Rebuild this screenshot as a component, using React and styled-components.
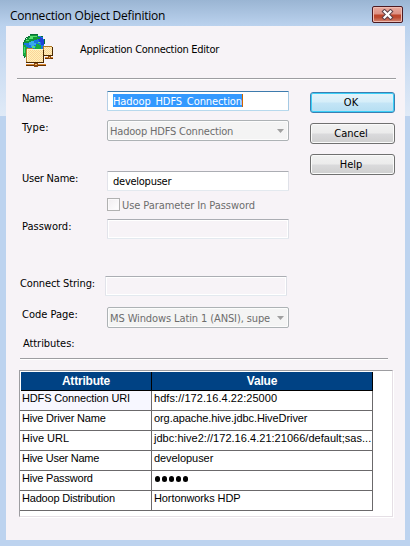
import React from 'react';
import styled, { createGlobalStyle } from 'styled-components';

const Global = createGlobalStyle`
  *, *::before, *::after { box-sizing: border-box; }
  body { margin: 0; }
`;

const Window = styled.div`
  width: 410px;
  height: 546px;
  display: flex;
  flex-direction: column;
  padding: 0 5px 6px 6px;
  background:
    linear-gradient(#9ab5d3 0, #bbd2ee 26px, transparent 26px),
    linear-gradient(#bbd2ee 26px, #e0eaf7 116px, #bdd3ef 116px);
  font: 11px/16px "DejaVu Sans Condensed", "DejaVu Sans", sans-serif;
  color: #000;
  white-space: nowrap;
`;

const TitleBar = styled.header`
  flex: none;
  height: 26px;
  display: flex;
  justify-content: space-between;
  padding: 6px 2px 0 4px;
`;

const Title = styled.h1`
  margin: 0;
  font: 12px/19px "Open Sans", sans-serif;
  letter-spacing: -0.22px;
`;

const CloseButton = styled.button`
  width: 31px;
  height: 17px;
  padding: 0;
  display: flex;
  align-items: center;
  justify-content: center;
  border: 1px solid #4c1a22;
  border-radius: 2px;
  background: linear-gradient(#e9aa9f 0, #dc8f82 48%, #bd4329 52%, #bd4b32 70%, #d48a78 100%);
  box-shadow: inset 0 0 0 1px #eebcb2;
`;

const Client = styled.main`
  flex: 1;
  background: #f7f3f7;
  overflow: hidden;
`;

const Heading = styled.div`
  display: flex;
  height: 52px;
  padding: 8px 0 0 16px;
`;

const HeadingText = styled.div`
  padding: 8px 0 0 26px;
  letter-spacing: -0.27px;
`;

const Divider = styled.hr`
  height: 2px;
  margin: ${(p) => p.$margin};
  border: 0;
  border-top: 1px solid #9d9da1;
  background: #fff;
`;

const Body = styled.div`
  display: flex;
  height: 278px;
  padding-top: 11px;
`;

const Form = styled.div`
  width: 283px;
`;

const Row = styled.div`
  display: flex;
  align-items: flex-start;
  height: ${(p) => p.$height}px;
`;

const Label = styled.label`
  flex: none;
  width: ${(p) => (p.$wide ? 99 : 101)}px;
  padding-left: ${(p) => (p.$wide ? 14 : 16)}px;
  letter-spacing: ${(p) => p.$spacing || 0}px;
`;

const Field = styled.div`
  width: 182px;
  height: 20px;
  padding: 2px 0 0 5px;
  border: 1px solid;
  border-color: ${(p) => (p.$focused ? '#3d7bad #a4c9e3 #b7d9ed #b5cfe7' : '#abadb3 #dfe1e8 #e3e9ef #e2e3ea')};
  border-radius: 1px;
  background: ${(p) => (p.$disabled ? '#f7f3f7' : '#fff')};
  box-shadow: ${(p) => (p.$disabled ? 'inset 0 0 0 1px #fff' : 'none')};
  letter-spacing: ${(p) => p.$spacing || 0}px;
  display: flex;
  align-items: flex-start;
`;

const Selection = styled.span`
  height: 13px;
  line-height: 15px;
  background: #3399ff;
  color: #fff;
  border-right: 1px solid #cc6600;
`;

const Combo = styled.div`
  width: 182px;
  height: 21px;
  display: flex;
  align-items: center;
  justify-content: space-between;
  padding: 0 4px 0 2px;
  border: 1px solid #adb2b5;
  border-radius: 2px;
  background: #f4f4f4;
  box-shadow: inset 0 0 0 1px #fcfcfc;
  color: #6d6d6d;
  letter-spacing: ${(p) => p.$spacing}px;
`;

const ComboText = styled.span`
  width: 160px;
  padding-top: 2px;
  overflow: hidden;
`;

const CheckRow = styled.div`
  display: flex;
  align-items: flex-start;
  height: 21px;
  padding-left: 101px;
  color: #6d6d6d;
  letter-spacing: -0.07px;
`;

const CheckBox = styled.span`
  width: 13px;
  height: 13px;
  margin-right: 2px;
  border: 1px solid #b1b1b1;
  background: linear-gradient(135deg, #f0edf0, #fff);
  box-shadow: inset 0 0 0 1px #fbf9fb;
`;

const Buttons = styled.div`
  display: flex;
  flex-direction: column;
  gap: 10px;
  padding: 1px 0 0 21px;
`;

const Button = styled.button`
  width: 85px;
  height: 21px;
  padding: 1px 3px 0 0;
  border: 1px solid ${(p) => (p.$primary ? '#3c7fb1' : '#707070')};
  border-radius: 3px;
  background: ${(p) =>
    p.$primary
      ? 'linear-gradient(#e5f3fa 0, #d5eef9 48%, #c4e5f6 52%, #b5def2 100%)'
      : 'linear-gradient(#f2f2f2 0, #ebebeb 48%, #dadadc 52%, #cfcfcf 100%)'};
  box-shadow: inset 0 0 0 1px ${(p) => (p.$primary ? '#3bd0f8' : '#fafafa')};
  font: inherit;
  color: #000;
`;

const TableFrame = styled.section`
  width: 374px;
  height: 147px;
  margin: 10px 0 0 13px;
  border: 1px solid;
  border-color: #9d9da1 #e5dfe5 #e5dfe5 #9d9da1;
  box-shadow: 1px 1px 0 #fff;
  background: #fff;
`;

const Table = styled.div`
  width: 353px;
  font: 11px/15px "Liberation Sans", Arial, sans-serif;
`;

const HeaderRow = styled.div`
  display: grid;
  grid-template-columns: 131px 221px;
  height: 20px;
  padding: 1px 0 0 1px;
`;

const HeaderCell = styled.div`
  border-right: 1px solid #000;
  border-bottom: 1px solid #000;
  background: #004284;
  color: #fff;
  font-weight: bold;
  font-size: 12px;
  letter-spacing: -0.2px;
  line-height: 18px;
  text-align: center;
`;

const TableRow = styled.div`
  display: grid;
  grid-template-columns: 132px 221px;
  height: 20px;
`;

const Cell = styled.div`
  overflow: hidden;
  padding: 0 0 0 2px;
  border-right: 1px solid #6b696b;
  border-bottom: 1px solid #6b696b;
  background: ${(p) => (p.$active ? '#f7f7ff' : '#fff')};
  letter-spacing: ${(p) => p.$spacing}px;
`;

const Dots = styled.span`
  display: flex;
  gap: 2px;
  padding: 5px 0 0 1px;
`;

const Dot = styled.i`
  width: 5px;
  height: 6px;
  border-radius: 3px;
  background: #000;
`;

function GlobeIcon() {
  return (
    <svg width="32" height="33" viewBox="0 0 32 33" shapeRendering="crispEdges">
      <defs>
        <pattern id="dither" width="2" height="2" patternUnits="userSpaceOnUse">
          <rect width="2" height="2" fill="#fff3b8" />
          <rect width="1" height="1" fill="#fbd29a" />
          <rect x="1" y="1" width="1" height="1" fill="#fbd29a" />
        </pattern>
      </defs>
      <path d="M8 1h8v1h3v1h2v2h1v2h1v3h-1v8H3v-1H1v-7h1V7h1V5h2V3h2V2h1z" fill="#1874de" />
      <path d="M8 7h4v2h2v2h-2v2H9v-2H7V8h1z" fill="#38a8ee" />
      <path d="M16 3h3v1h2v2h1v5h-3V8h-2z" fill="#2040d8" />
      <path d="M8 1h8v2h2v2h-3v1h-3v1H9v1H7v1H2V7h1V5h2V3h3z" fill="#109838" />
      <path d="M8 2h7v1h-4v2H7V4h1zM4 6h3v1H4z" fill="#58e070" />
      <path d="M1 11h3v2h2v2H4v8H2v-2H1z" fill="#18a840" />
      <path d="M2 13h1v6H2zM10 12h3v2h-3zM16 8h2v1h-2z" fill="#50e078" />
      <path d="M14 10h3v1h2v4h-6v-2h1z" fill="#18a840" />
      <path d="M8 0h8v1H8zM6 2h2v1H6zM4 3h2v1H4zM3 4h1v2H3zM2 6h1v2H2zM1 8h1v3H1zM1 21h1v1H1zM2 22h1v2H2zM19 2h2v1h-2zM22 5h1v5h-1z" fill="#087038" />
      <path d="M21 12h9v10h-9z" fill="#b07820" />
      <path d="M22 13h8v8h-8z" fill="url(#dither)" />
      <path d="M21 22h10V13h-1v8h-9z" fill="#4a2800" />
      <path d="M5 14h6v1h11v14H4V15h1z" fill="#b58434" />
      <path d="M5 15h16v13H5z" fill="url(#dither)" />
      <path d="M5 15h16v1H5zM5 16h1v11H5z" fill="#fff8cc" />
      <path d="M4 28h17V16h1v13H4z" fill="#4a2800" />
      <path d="M4 30h20v1H4zM23 23h8v1h-8z" fill="#d8842c" />
      <path d="M4 31h20v1H4zM23 24h8v1h-8z" fill="#633000" />
      <path d="M12 29h4v4h-4zM26 22h3v3h-3z" fill="#8c4a10" />
      <path d="M13 30h2v1h-2zM27 23h1v1h-1z" fill="#f8c070" />
    </svg>
  );
}

function CloseIcon() {
  return (
    <svg width="13" height="11" viewBox="0 0 13 11">
      <path d="M3.5 2.5l6 6M9.5 2.5l-6 6" stroke="#5c4148" strokeWidth="4.2" strokeLinecap="square" />
      <path d="M3.5 2.5l6 6M9.5 2.5l-6 6" stroke="#fff" strokeWidth="2.2" strokeLinecap="square" />
    </svg>
  );
}

const Arrow = () => (
  <svg width="7" height="4" viewBox="0 0 7 4">
    <path d="M0 0h7L3.5 4z" fill="#a0a0a0" />
  </svg>
);

const attributes = [
  ['HDFS Connection URI', -0.14, 'hdfs://172.16.4.22:25000', 0.06],
  ['Hive Driver Name', -0.2, 'org.apache.hive.jdbc.HiveDriver', -0.08],
  ['Hive URL', 0, 'jdbc:hive2://172.16.4.21:21066/default;sas...', 0.03],
  ['Hive User Name', -0.26, 'developuser', -0.06],
  ['Hive Password', -0.2, null, 0],
  ['Hadoop Distribution', -0.2, 'Hortonworks HDP', -0.1],
];

export default function App() {
  return (
    <Window>
      <Global />
      <TitleBar>
        <Title>Connection Object Definition</Title>
        <CloseButton aria-label="Close"><CloseIcon /></CloseButton>
      </TitleBar>
      <Client>
        <Heading>
          <GlobeIcon />
          <HeadingText>Application Connection Editor</HeadingText>
        </Heading>
        <Divider $margin="0 9px 0 11px" />
        <Body>
          <Form>
            <Row $height={29}>
              <Label $spacing={-0.3}>Name:</Label>
              <Field $focused $spacing={-0.09}><Selection>Hadoop_HDFS_Connection</Selection></Field>
            </Row>
            <Row $height={51}>
              <Label $spacing={0.2}>Type:</Label>
              <Combo $spacing={-0.19}><ComboText>Hadoop HDFS Connection</ComboText><Arrow /></Combo>
            </Row>
            <Row $height={27}>
              <Label $spacing={-0.22}>User Name:</Label>
              <Field $spacing={-0.25}>developuser</Field>
            </Row>
            <CheckRow><CheckBox />Use Parameter In Password</CheckRow>
            <Row $height={57}>
              <Label>Password:</Label>
              <Field $disabled />
            </Row>
            <Row $height={31}>
              <Label $wide $spacing={-0.13}>Connect String:</Label>
              <Field $disabled />
            </Row>
            <Row $height={29}>
              <Label>Code Page:</Label>
              <Combo $spacing={-0.11}><ComboText>MS Windows Latin 1 (ANSI), supe</ComboText><Arrow /></Combo>
            </Row>
            <Row $height={22}>
              <Label $spacing={-0.05}>&#8202;Attributes:</Label>
            </Row>
          </Form>
          <Buttons>
            <Button $primary>OK</Button>
            <Button>Cancel</Button>
            <Button>Help</Button>
          </Buttons>
        </Body>
        <Divider $margin="0 17px 0 14px" />
        <TableFrame>
          <Table>
            <HeaderRow>
              <HeaderCell>Attribute</HeaderCell>
              <HeaderCell>Value</HeaderCell>
            </HeaderRow>
            {attributes.map(([name, nameSpacing, value, valueSpacing], i) => (
              <TableRow key={name}>
                <Cell $active={i === 0} $spacing={nameSpacing}>{name}</Cell>
                <Cell $spacing={valueSpacing}>
                  {value ?? <Dots><Dot /><Dot /><Dot /><Dot /><Dot /></Dots>}
                </Cell>
              </TableRow>
            ))}
          </Table>
        </TableFrame>
      </Client>
    </Window>
  );
}
